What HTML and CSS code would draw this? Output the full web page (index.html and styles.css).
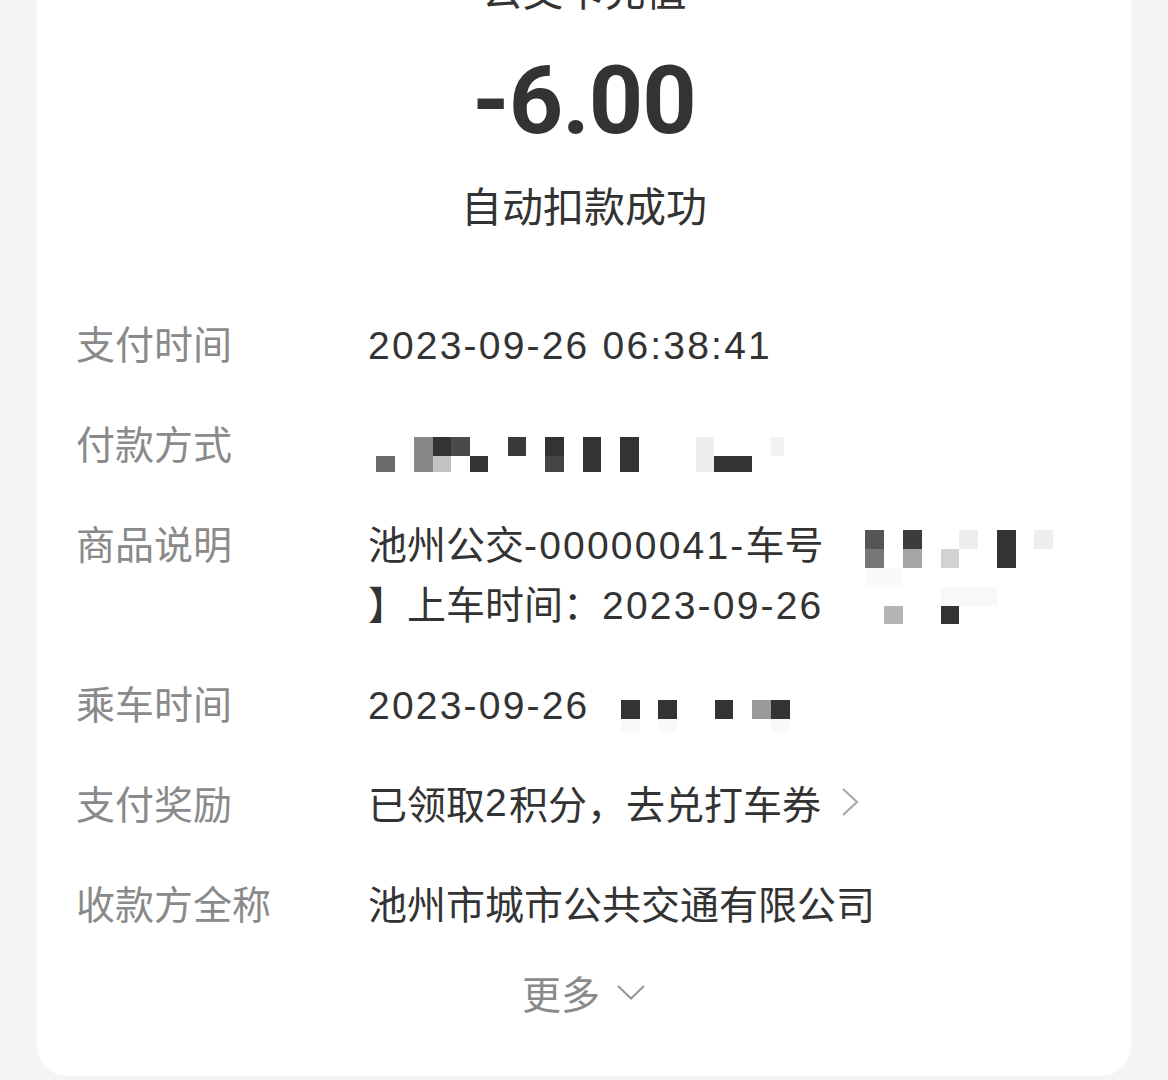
FILE: index.html
```html
<!DOCTYPE html>
<html lang="zh-CN">
<head>
<meta charset="utf-8">
<title>账单详情</title>
<link rel="stylesheet" href="styles.css">
</head>
<body>
<div class="card">
  <div class="head">
    <div class="title">公交卡充值</div>
    <div class="amount">-6.00</div>
    <div class="status">自动扣款成功</div>
  </div>
  <div class="list">
    <div class="row">
      <div class="label">支付时间</div>
      <div class="value"><span class="num">2023-09-26 06:38:41</span></div>
    </div>
    <div class="row">
      <div class="label">付款方式</div>
      <div class="value">
        <svg class="mosaic-pay" width="420" height="60" viewBox="0 0 420 60">
          <rect x="8" y="44" width="19" height="18" fill="#6a6a6a"/>
          <rect x="46" y="25" width="19" height="37" fill="#888"/>
          <rect x="65" y="25" width="18" height="19" fill="#333"/>
          <rect x="83" y="25" width="19" height="19" fill="#4a4a4a"/>
          <rect x="65" y="44" width="18" height="18" fill="#c2c2c2"/>
          <rect x="102" y="44" width="18" height="18" fill="#333"/>
          <rect x="140" y="25" width="18" height="19" fill="#3a3a3a"/>
          <rect x="177" y="25" width="19" height="19" fill="#333"/>
          <rect x="177" y="44" width="19" height="18" fill="#444"/>
          <rect x="215" y="25" width="18" height="37" fill="#333"/>
          <rect x="252" y="25" width="19" height="37" fill="#333"/>
          <rect x="328" y="25" width="18" height="37" fill="#eee"/>
          <rect x="346" y="44" width="38" height="18" fill="#333"/>
          <rect x="403" y="25" width="13" height="19" fill="#f2f2f2"/>
        </svg>
      </div>
    </div>
    <div class="row">
      <div class="label">商品说明</div>
      <div class="value masked">
        <div>池州公交<span class="num">-00000041-</span>车号</div>
        <div>】上车时间：<span class="num">2023-09-26</span></div>
        <svg class="mask mask-goods" width="260" height="120" viewBox="0 0 260 120">
          <rect x="0" y="0" width="260" height="120" fill="#fff"/>
          <rect x="32" y="18" width="19" height="19" fill="#555"/>
          <rect x="32" y="37" width="19" height="19" fill="#777"/>
          <rect x="70" y="18" width="19" height="19" fill="#3c3c3c"/>
          <rect x="70" y="37" width="19" height="19" fill="#a5a5a5"/>
          <rect x="108" y="37" width="18" height="19" fill="#d2d2d2"/>
          <rect x="126" y="18" width="19" height="19" fill="#eee"/>
          <rect x="164" y="18" width="19" height="38" fill="#333"/>
          <rect x="201" y="18" width="19" height="19" fill="#eee"/>
          <rect x="32" y="56" width="38" height="19" fill="#fafafa"/>
          <rect x="108" y="75" width="56" height="19" fill="#f8f8f8"/>
          <rect x="51" y="94" width="19" height="18" fill="#b5b5b5"/>
          <rect x="108" y="94" width="18" height="18" fill="#333"/>
        </svg>
      </div>
    </div>
    <div class="row">
      <div class="label">乘车时间</div>
      <div class="value masked">
        <div><span class="num">2023-09-26</span></div>
        <svg class="mask mask-ride" width="220" height="60" viewBox="0 0 220 60">
          <rect x="0" y="0" width="220" height="60" fill="#fff"/>
          <rect x="18" y="28" width="19" height="19" fill="#333"/>
          <rect x="55" y="28" width="19" height="19" fill="#333"/>
          <rect x="112" y="28" width="18" height="19" fill="#333"/>
          <rect x="149" y="28" width="19" height="19" fill="#9a9a9a"/>
          <rect x="168" y="28" width="19" height="19" fill="#333"/>
          <rect x="18" y="47" width="19" height="13" fill="#f9f9f9"/>
          <rect x="55" y="47" width="19" height="13" fill="#f9f9f9"/>
          <rect x="168" y="47" width="19" height="13" fill="#f9f9f9"/>
        </svg>
      </div>
    </div>
    <div class="row">
      <div class="label">支付奖励</div>
      <div class="value link">已领取<span class="num">2</span>积分，去兑打车券
        <svg class="chev-right" width="18" height="30" viewBox="0 0 18 30"><path d="M2 2 L16 15 L2 28" fill="none" stroke="#aaa" stroke-width="2.2"/></svg>
      </div>
    </div>
    <div class="row">
      <div class="label">收款方全称</div>
      <div class="value">池州市城市公共交通有限公司</div>
    </div>
  </div>
  <div class="more">更多
    <svg class="chev-down" width="30" height="16" viewBox="0 0 30 16"><path d="M2 2 L15 14.5 L28 2" fill="none" stroke="#999" stroke-width="2.2"/></svg>
  </div>
</div>
</body>
</html>
```
FILE: styles.css
```css
html, body {
  margin: 0;
  padding: 0;
  background: #f4f4f4;
  font-family: "Noto Sans CJK SC", "Noto Sans", sans-serif;
  color: #333;
  overflow: hidden;
}

.card {
  margin: -42px 37px 0;
  width: 1094px;
  box-sizing: border-box;
  background: #fff;
  border-radius: 0 0 30px 30px;
  padding: 0 39px 54px;
}

.head {
  display: flex;
  flex-direction: column;
  align-items: center;
}

.title {
  font-size: 41px;
  line-height: 60px;
  color: #333;
}

.amount {
  margin-top: 28px;
  font-family: "Roboto", "Liberation Sans", sans-serif;
  font-weight: 700;
  font-size: 95px;
  line-height: 110px;
  color: #333;
  letter-spacing: -1px;
}

.status {
  margin-top: 18px;
  font-size: 41px;
  line-height: 60px;
  color: #333;
}

.list {
  margin-top: 58px;
}

.row {
  display: flex;
  padding: 20px 0;
  font-size: 39px;
  line-height: 60px;
}

.label {
  width: 292px;
  flex: none;
  color: #8a8a8a;
}

.value {
  flex: 1;
  color: #333;
  min-height: 60px;
}

.value > div {
  height: 60px;
}

.num {
  font-family: "Liberation Sans", "Noto Sans", sans-serif;
  letter-spacing: 2.2px;
  line-height: 1;
}

.value.masked {
  position: relative;
}

.mosaic-pay {
  display: block;
}

.mask {
  position: absolute;
  top: 0;
  display: block;
}

.mask-goods {
  left: 465px;
}

.mask-ride {
  left: 235px;
}

.link {
  display: flex;
  align-items: center;
  height: 60px;
}

.chev-right {
  margin-left: 20px;
  display: block;
}

.more {
  margin-top: 10px;
  display: flex;
  align-items: center;
  justify-content: center;
  font-size: 39px;
  line-height: 60px;
  color: #8a8a8a;
}

.chev-down {
  margin-left: 16px;
  display: block;
}
```
